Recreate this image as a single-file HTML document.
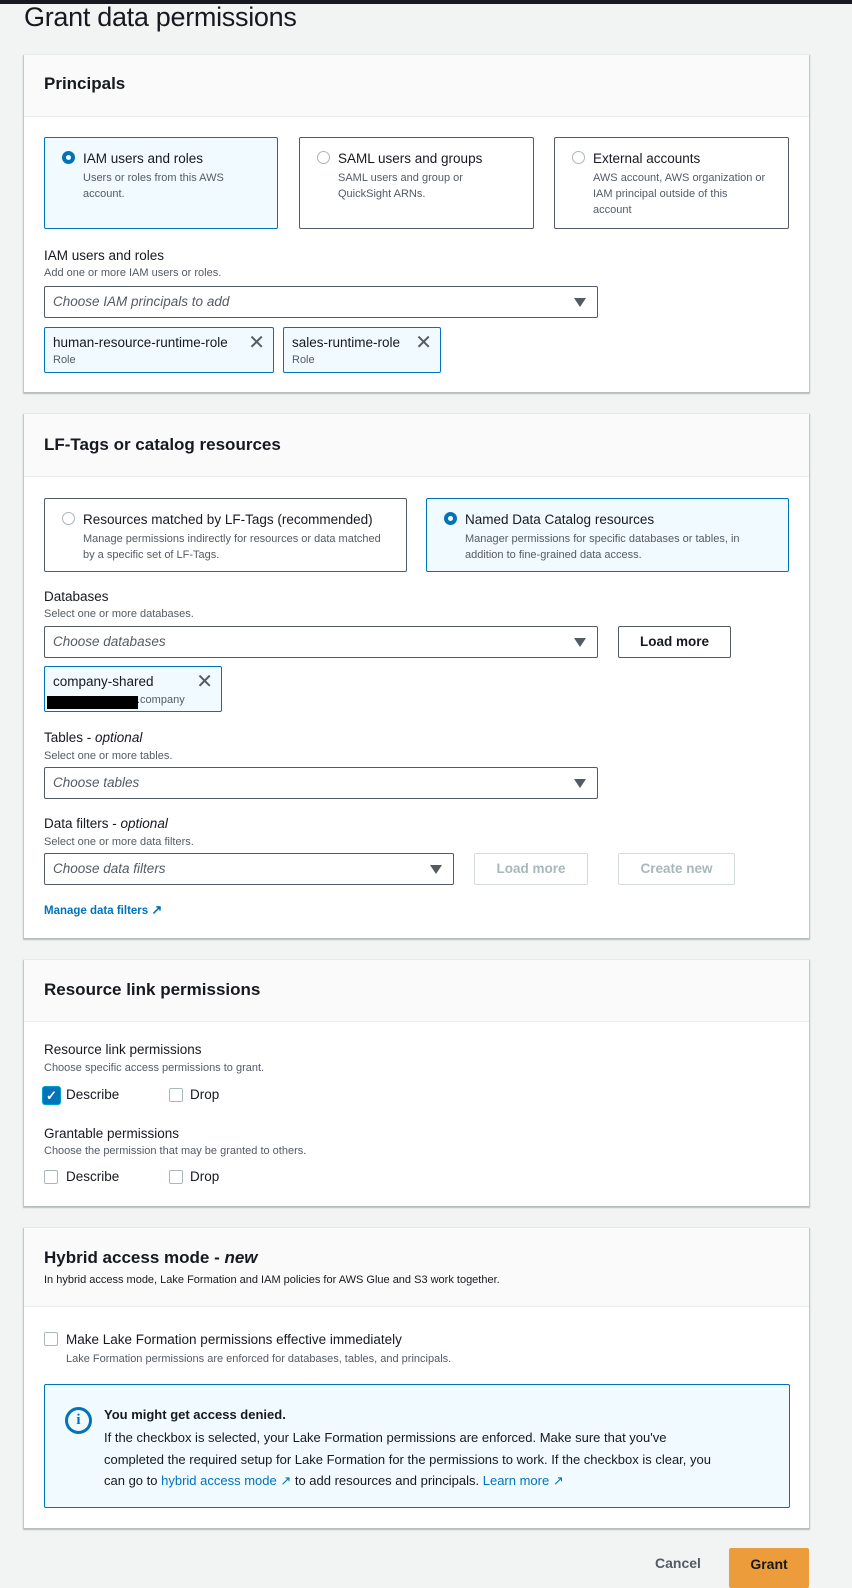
<!DOCTYPE html>
<html><head><meta charset="utf-8"><style>
*{box-sizing:border-box;margin:0;padding:0}
body{width:852px;height:1578px;background:#f2f3f3;font-family:"Liberation Sans",sans-serif;color:#16191f;position:relative;overflow:hidden}
.a{position:absolute}
.topbar{left:0;top:0;width:852px;height:4px;background:#16191f}
h1{position:absolute;left:24px;top:2px;font-size:27px;font-weight:400;letter-spacing:-0.3px}
.panel{position:absolute;left:24px;width:785px;background:#fff;box-shadow:0 1px 1px 1px rgba(0,28,36,.25)}
.ph{position:absolute;left:0;top:0;width:100%;background:#fafafa;border-bottom:1px solid #eaeded}
.ph b{position:absolute;left:20px;font-size:17px}
.t{font-size:13.5px}
.d{font-size:11px;color:#545b64;line-height:16px}
.card{position:absolute;border:1px solid #545b64;border-radius:2px;background:#fff}
.card.sel{border:1.5px solid #0073bb;background:#f1faff}
.radio{position:absolute;width:13px;height:13px;border-radius:50%;border:1.5px solid #aab7b8;background:#fff}
.radio.on{border:4px solid #0073bb}
.sel-in{position:absolute;border:1px solid #545b64;border-radius:2px;background:#fff;height:32px}
.sel-in i{position:absolute;left:8px;top:7px;font-size:13.5px;color:#545b64}
.caret{position:absolute;right:11px;top:11px;width:0;height:0;border-left:6px solid transparent;border-right:6px solid transparent;border-top:9px solid #545b64}
.tok{position:absolute;border:1.5px solid #0073bb;border-radius:2px;background:#f1faff;height:46px}
.tok .n{position:absolute;left:8px;top:7px;font-size:13.5px}
.tok .r{position:absolute;left:8px;top:26px;font-size:11px;color:#545b64}
.x{position:absolute;top:6px;font-size:20px;color:#545b64;line-height:18px}
.btn{position:absolute;height:32px;border:1.5px solid #545b64;border-radius:2px;font-size:13.5px;font-weight:700;text-align:center;line-height:29px;background:#fff}
.btn.dis{border:1px solid #d5dbdb;color:#aab7b8}
.cb{position:absolute;width:14px;height:14px;border:1px solid #aab7b8;border-radius:2px;background:#fff}
a{color:#0073bb}
</style></head><body>
<div class="a topbar"></div>
<h1>Grant data permissions</h1>

<div class="panel" style="top:55px;height:337px">
 <div class="ph" style="height:62px"><b style="top:19px">Principals</b></div>
 <div class="card sel" style="left:20px;top:82px;width:234px;height:92px">
  <div class="radio on" style="left:17px;top:13px"></div>
  <div class="a t" style="left:38px;top:13px">IAM users and roles</div>
  <div class="a d" style="left:38px;top:32px;width:180px">Users or roles from this AWS account.</div>
 </div>
 <div class="card" style="left:275px;top:82px;width:235px;height:92px">
  <div class="radio" style="left:17px;top:13px"></div>
  <div class="a t" style="left:38px;top:13px">SAML users and groups</div>
  <div class="a d" style="left:38px;top:32px;width:170px">SAML users and group or QuickSight ARNs.</div>
 </div>
 <div class="card" style="left:530px;top:82px;width:235px;height:92px">
  <div class="radio" style="left:17px;top:13px"></div>
  <div class="a t" style="left:38px;top:13px">External accounts</div>
  <div class="a d" style="left:38px;top:32px;width:176px">AWS account, AWS organization or IAM principal outside of this account</div>
 </div>
 <div class="a t" style="left:20px;top:193px">IAM users and roles</div>
 <div class="a d" style="left:20px;top:210px">Add one or more IAM users or roles.</div>
 <div class="sel-in" style="left:20px;top:231px;width:554px"><i>Choose IAM principals to add</i><div class="caret"></div></div>
 <div class="tok" style="left:20px;top:272px;width:230px"><span class="n">human-resource-runtime-role</span><span class="r">Role</span><span class="x" style="right:8px">✕</span></div>
 <div class="tok" style="left:259px;top:272px;width:158px"><span class="n">sales-runtime-role</span><span class="r">Role</span><span class="x" style="right:8px">✕</span></div>
</div>

<div class="panel" style="top:414px;height:524px">
 <div class="ph" style="height:63px"><b style="top:21px">LF-Tags or catalog resources</b></div>
 <div class="card" style="left:20px;top:84px;width:363px;height:74px">
  <div class="radio" style="left:17px;top:13px"></div>
  <div class="a t" style="left:38px;top:13px">Resources matched by LF-Tags (recommended)</div>
  <div class="a d" style="left:38px;top:32px;width:300px">Manage permissions indirectly for resources or data matched by a specific set of LF-Tags.</div>
 </div>
 <div class="card sel" style="left:402px;top:84px;width:363px;height:74px">
  <div class="radio on" style="left:17px;top:13px"></div>
  <div class="a t" style="left:38px;top:13px">Named Data Catalog resources</div>
  <div class="a d" style="left:38px;top:32px;width:310px">Manager permissions for specific databases or tables, in addition to fine-grained data access.</div>
 </div>
 <div class="a t" style="left:20px;top:175px">Databases</div>
 <div class="a d" style="left:20px;top:192px">Select one or more databases.</div>
 <div class="sel-in" style="left:20px;top:212px;width:554px"><i>Choose databases</i><div class="caret"></div></div>
 <div class="btn" style="left:594px;top:212px;width:113px">Load more</div>
 <div class="tok" style="left:20px;top:252px;width:178px;border-width:1px">
  <span class="n">company-shared</span><span class="x" style="right:8px">✕</span>
  <div class="a" style="left:2px;top:29px;width:91px;height:13px;background:#000"></div>
  <span class="a" style="left:92px;top:27px;font-size:11px;color:#545b64">.company</span>
 </div>
 <div class="a t" style="left:20px;top:316px">Tables - <i>optional</i></div>
 <div class="a d" style="left:20px;top:334px">Select one or more tables.</div>
 <div class="sel-in" style="left:20px;top:353px;width:554px"><i>Choose tables</i><div class="caret"></div></div>
 <div class="a t" style="left:20px;top:402px">Data filters - <i>optional</i></div>
 <div class="a d" style="left:20px;top:420px">Select one or more data filters.</div>
 <div class="sel-in" style="left:20px;top:439px;width:410px"><i>Choose data filters</i><div class="caret"></div></div>
 <div class="btn dis" style="left:450px;top:439px;width:114px">Load more</div>
 <div class="btn dis" style="left:594px;top:439px;width:117px">Create new</div>
 <div class="a" style="left:20px;top:488px;font-size:11.5px;font-weight:700;color:#0073bb">Manage data filters <span style="font-size:13px">↗</span></div>
</div>

<div class="panel" style="top:960px;height:246px">
 <div class="ph" style="height:62px"><b style="top:20px">Resource link permissions</b></div>
 <div class="a t" style="left:20px;top:82px">Resource link permissions</div>
 <div class="a d" style="left:20px;top:100px">Choose specific access permissions to grant.</div>
 <div class="cb" style="left:19px;top:127px;width:17px;height:17px;background:#0073bb;border:2px solid #0073bb;color:#fff;font-size:13px;line-height:13px;text-align:center;font-weight:700;box-shadow:0 0 0 1px #00a1c9">✓</div>
 <div class="a t" style="left:42px;top:127px">Describe</div>
 <div class="cb" style="left:145px;top:128px"></div>
 <div class="a t" style="left:166px;top:127px">Drop</div>
 <div class="a t" style="left:20px;top:166px">Grantable permissions</div>
 <div class="a d" style="left:20px;top:183px">Choose the permission that may be granted to others.</div>
 <div class="cb" style="left:20px;top:210px"></div>
 <div class="a t" style="left:42px;top:209px">Describe</div>
 <div class="cb" style="left:145px;top:210px"></div>
 <div class="a t" style="left:166px;top:209px">Drop</div>
</div>

<div class="panel" style="top:1228px;height:300px">
 <div class="ph" style="height:79px"><b style="top:20px">Hybrid access mode - <i>new</i></b>
  <div class="a d" style="left:20px;top:44px;color:#16191f;font-size:11px">In hybrid access mode, Lake Formation and IAM policies for AWS Glue and S3 work together.</div></div>
 <div class="cb" style="left:20px;top:104px"></div>
 <div class="a t" style="left:42px;top:104px">Make Lake Formation permissions effective immediately</div>
 <div class="a d" style="left:42px;top:123px">Lake Formation permissions are enforced for databases, tables, and principals.</div>
 <div class="a" style="left:20px;top:156px;width:746px;height:124px;border:1.5px solid #0073bb;border-radius:2px;background:#f1faff">
  <div class="a" style="left:20px;top:22px;width:27px;height:27px;border:3px solid #0073bb;border-radius:50%;color:#0073bb;font-weight:700;text-align:center;line-height:21px;font-size:15px;font-family:'Liberation Serif',serif">i</div>
  <div class="a" style="left:59px;top:22px;font-size:13px;font-weight:700">You might get access denied.</div>
  <div class="a" style="left:59px;top:42px;width:612px;font-size:13px;line-height:21.5px">If the checkbox is selected, your Lake Formation permissions are enforced. Make sure that you've completed the required setup for Lake Formation for the permissions to work. If the checkbox is clear, you can go to <a>hybrid access mode ↗</a> to add resources and principals. <a>Learn more ↗</a></div>
 </div>
</div>

<div class="a" style="left:655px;top:1555px;font-size:14px;font-weight:700;color:#545b64">Cancel</div>
<div class="a" style="left:729px;top:1548px;width:80px;height:40px;background:#ec9c3b;border-radius:2px;font-size:14px;font-weight:700;text-align:center;padding-top:8px">Grant</div>
</body></html>
